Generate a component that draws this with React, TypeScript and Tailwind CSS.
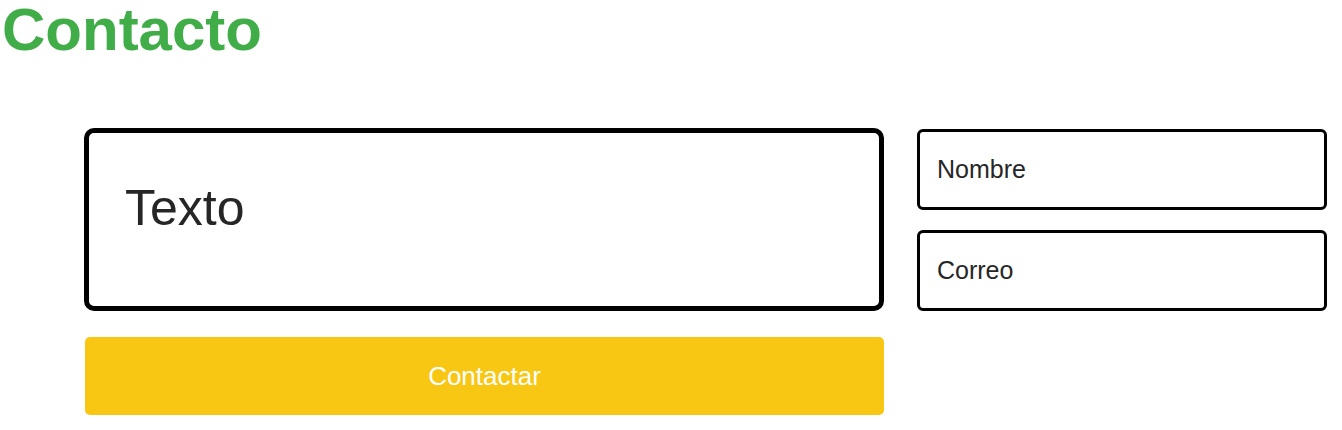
const App = () => {
  return (
    <div className="min-h-[430px] bg-white font-['Liberation_Sans',Arial,sans-serif]">
      <h1 className="-mt-1 ml-0.5 text-[60px] leading-[68px] font-bold text-[#41ad49]">Contacto</h1>

      <div className="mt-16 pl-[84px] flex gap-[33px]">
        {/* message + submit */}
        <div className="w-[800px] flex flex-col gap-[26px]">
          <textarea
            placeholder="Texto"
            className="h-[183px] w-full resize-none rounded-[10px] border-[5px] border-black bg-white pl-9 pt-[38px] text-[50px] text-[#262626] placeholder:text-[#262626] outline-none"
          />
          <button className="ml-px h-[78px] w-[799px] rounded-[5px] bg-[#f8c714] text-[26px] text-white">
            Contactar
          </button>
        </div>

        {/* name / mail */}
        <div className="mt-px w-[410px] flex flex-col gap-5">
          <input
            placeholder="Nombre"
            className="h-[81px] rounded-[6px] border-[3px] border-black px-[17px] text-[25px] text-[#262626] placeholder:text-[#262626] outline-none"
          />
          <input
            placeholder="Correo"
            className="h-[81px] rounded-[6px] border-[3px] border-black px-[17px] text-[25px] text-[#262626] placeholder:text-[#262626] outline-none"
          />
        </div>
      </div>
    </div>
  );
};

export default App;
